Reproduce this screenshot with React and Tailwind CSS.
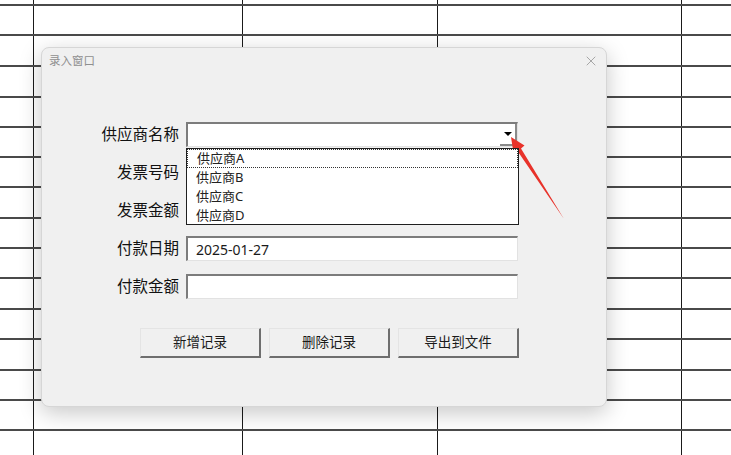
import { X } from "lucide-react";

const rowHeights = [
  "h-[6px]", "h-[30px]", "h-[31px]", "h-[31px]", "h-[30px]", "h-[30px]", "h-[30px]", "h-[31px]",
  "h-[30px]", "h-[30px]", "h-[31px]", "h-[30px]", "h-[31px]", "h-[30px]", "h-[30px]", "h-[40px]",
];

const fields = ["供应商名称", "发票号码", "发票金额", "付款日期", "付款金额"];
const suppliers = ["供应商A", "供应商B", "供应商C", "供应商D"];
const buttons = ["新增记录", "删除记录", "导出到文件"];

function SheetBackground() {
  return (
    <div className="flex flex-col">
      {rowHeights.map((h, i) => (
        <div key={i} className={`${h} flex border-b-2 border-[#4a4a4a]`}>
          <div className="w-[34px] border-r border-[#1a1a1a]" />
          <div className="w-[209px] border-r border-[#1a1a1a]" />
          <div className="w-[195px] border-r border-[#1a1a1a]" />
          <div className="w-[244px] border-r border-[#1a1a1a]" />
          <div className="flex-1" />
        </div>
      ))}
    </div>
  );
}

function SunkenInput({ value, children }) {
  return (
    <div className="relative w-[332px] h-[25px] bg-white border-t-2 border-l-2 border-[#7c7c7c] border-b border-r border-b-[#e2e2e2] border-r-[#e2e2e2] flex items-center">
      {value && <span className="pl-[8px] text-[14px] text-[#1a1a1a]">{value}</span>}
      {children}
    </div>
  );
}

function ComboBox() {
  return (
    <SunkenInput>
      <div className="ml-auto w-[17px] h-full bg-white border-b-2 border-r-2 border-[#8a8a8a] flex items-center justify-center">
        <div className="w-0 h-0 border-l-[4px] border-r-[4px] border-t-[4px] border-l-transparent border-r-transparent border-t-black" />
      </div>
      {/* open dropdown list */}
      <div className="absolute left-[-2px] top-[24px] z-10 w-[333px] h-[77px] bg-white border border-[#1f1f1f]">
        {suppliers.map((s, i) => (
          <div key={s}
            className={`h-[19px] flex items-center pl-[9px] text-[13px] text-[#222] leading-none ${i === 0 ? "border border-dotted border-[#333]" : ""}`}>
            {s}
          </div>
        ))}
      </div>
    </SunkenInput>
  );
}

function Arrow() {
  return (
    <svg className="absolute inset-0 pointer-events-none" width="731" height="455" viewBox="0 0 731 455">
      <polygon
        points="511,137 524.5,145.5 521,148.5 564,219 517.5,151 513.5,153"
        fill="#e8322a"
      />
    </svg>
  );
}

export default function App() {
  return (
    <div className="relative w-[731px] h-[455px] overflow-hidden bg-white font-['Noto_Sans','Noto_Sans_CJK_SC',sans-serif]">
      <SheetBackground />

      {/* dialog */}
      <div className="absolute left-[41px] top-[47px] w-[566px] h-[360px] rounded-[8px] bg-[#f0f0f0] border border-[#d6d6d6] shadow-[0_6px_22px_rgba(0,0,0,0.22)] flex flex-col">
        <div className="h-[26px] flex items-center justify-between pl-[7px] pr-[7px]">
          <span className="text-[11.5px] text-[#8f8f8f]">录入窗口</span>
          <X className="w-[16px] h-[16px] text-[#8a8a8a]" strokeWidth={1.1} />
        </div>

        <div className="pt-[48px] flex flex-col gap-[13px]">
          {fields.map((f, i) => (
            <div key={f} className="flex items-center h-[25px]">
              <label className="w-[137px] text-right text-[15.5px] text-[#111]">{f}</label>
              <div className="ml-[7px]">
                {i === 0 ? <ComboBox /> : <SunkenInput value={i === 3 ? "2025-01-27" : ""} />}
              </div>
            </div>
          ))}
        </div>

        <div className="mt-[29px] pl-[98px] flex gap-[8px]">
          {buttons.map((b) => (
            <button key={b}
              className="w-[121px] h-[30px] bg-[#f0f0f0] border-t border-l border-[#e4e4e4] border-b-2 border-r-2 border-b-[#6e6e6e] border-r-[#6e6e6e] text-[13.5px] text-[#1a1a1a]">
              {b}
            </button>
          ))}
        </div>
      </div>

      <Arrow />
    </div>
  );
}
